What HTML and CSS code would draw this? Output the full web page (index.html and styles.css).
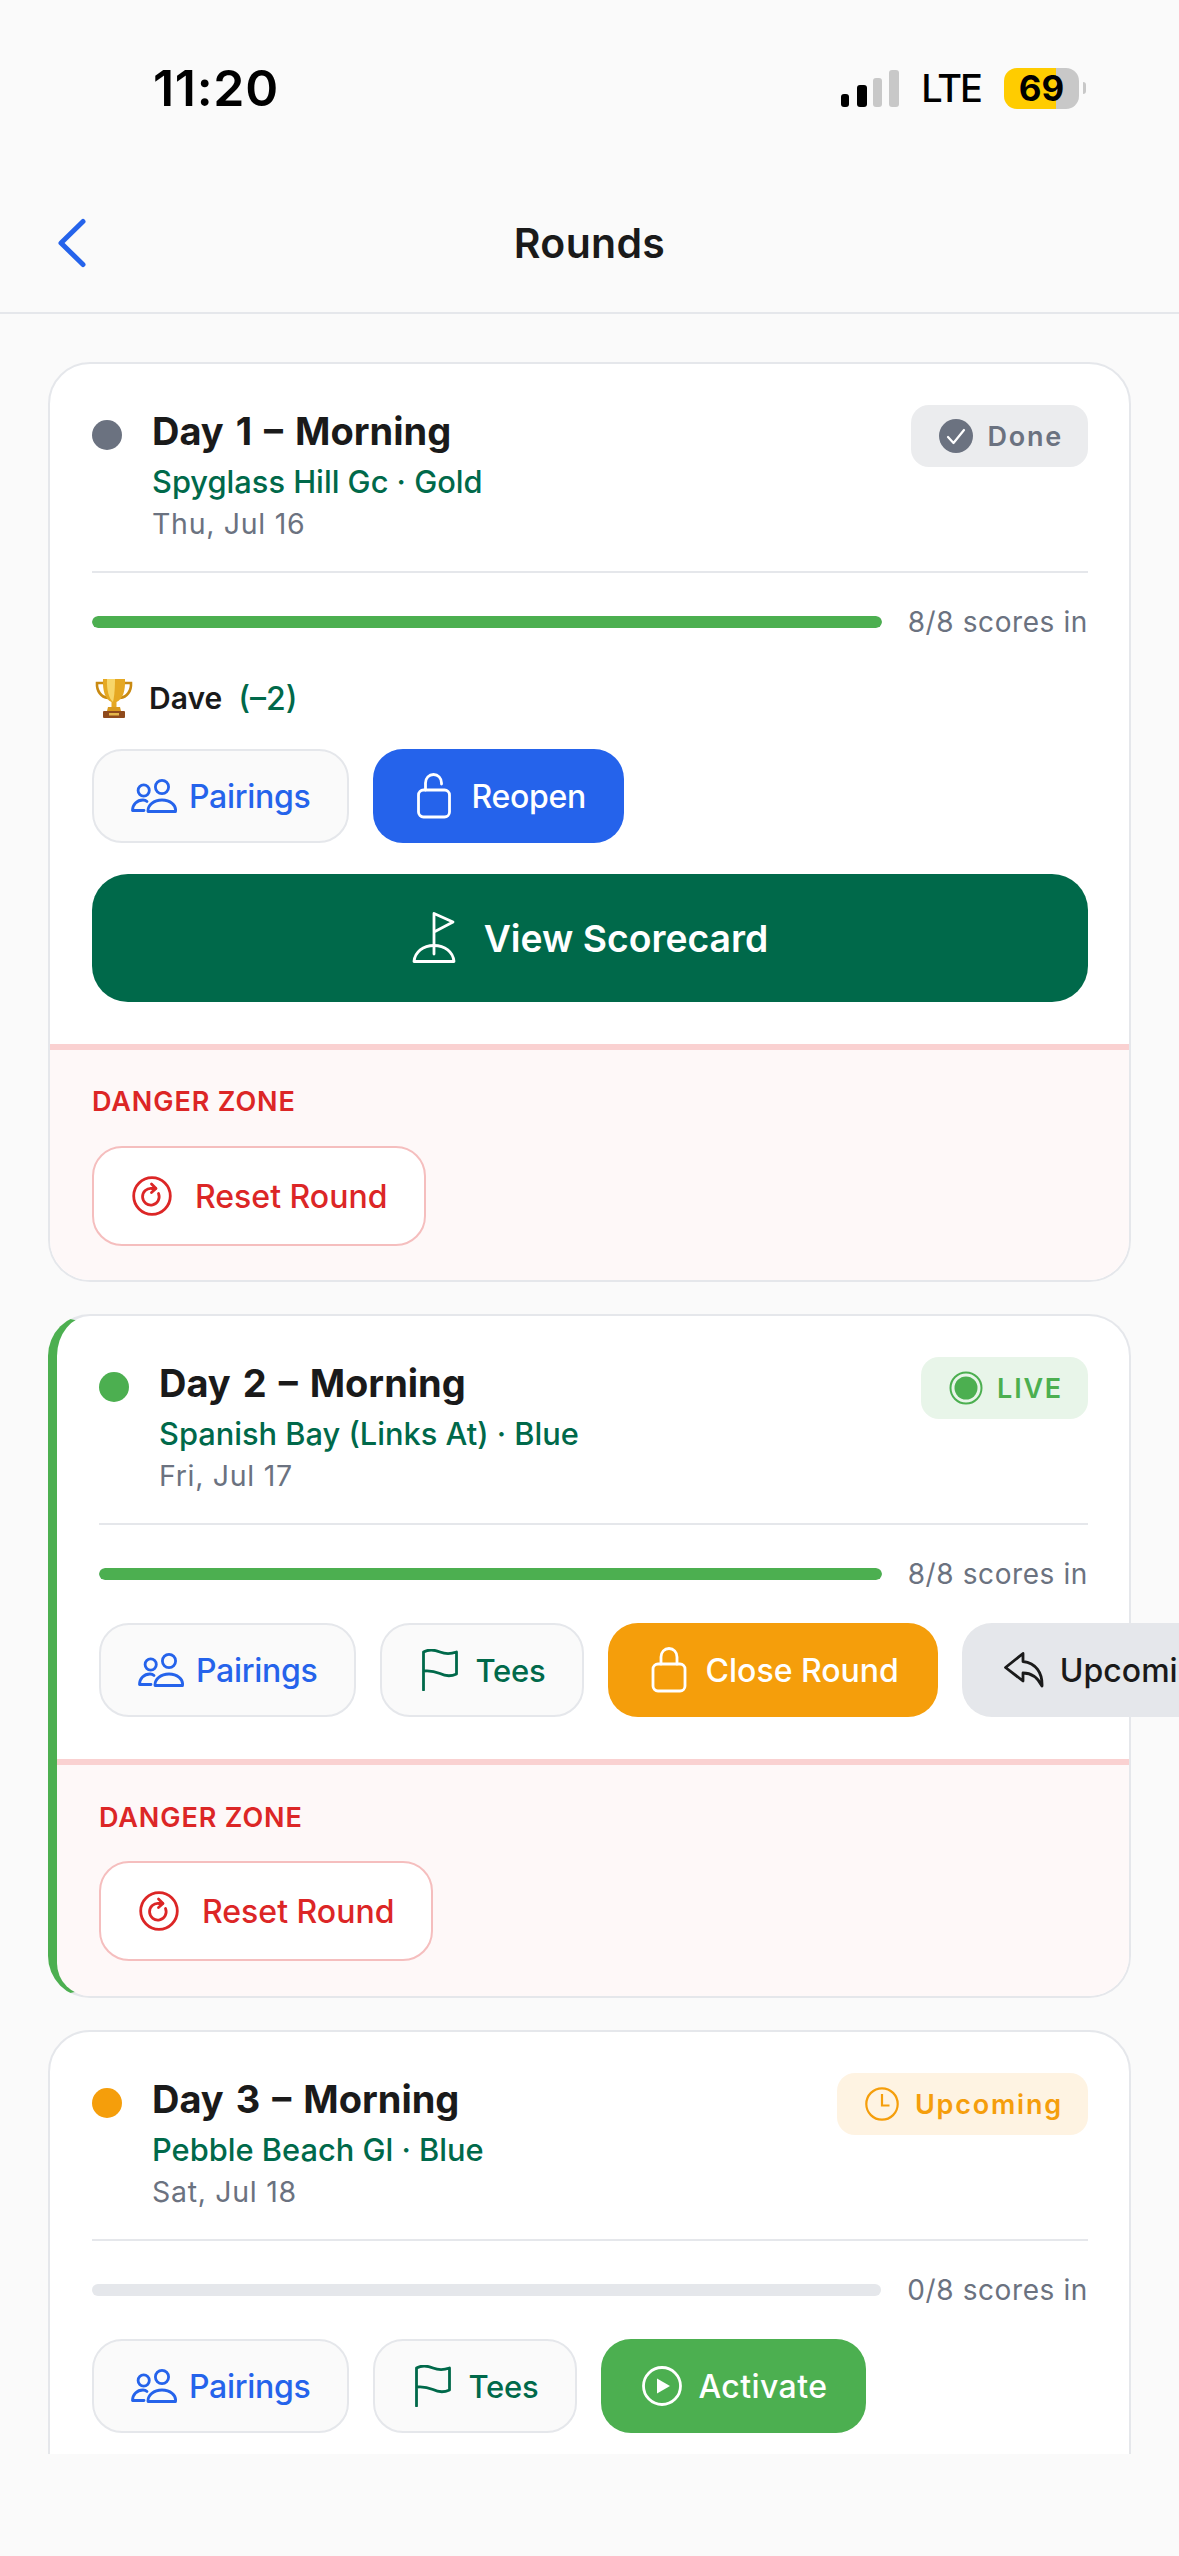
FILE: index.html
```html
<!DOCTYPE html>
<html lang="en">
<head>
<meta charset="utf-8">
<title>Rounds</title>
<link rel="stylesheet" href="styles.css">
</head>
<body>
<svg class="defs" width="0" height="0" aria-hidden="true">
  <defs>
    <symbol id="i-people" viewBox="0 0 46 34"><circle cx="12.700" cy="11.500" r="5.600"/><circle cx="31" cy="8" r="6.600"/><path d="M17 32.500C16.500 26 23 21 31 21C39 21 45.500 26 44.500 32.500Z"/><path d="M16 22.500C15 21.500 13.500 21 12 21C6 21 1.500 25.500 1.500 31.500H13"/></symbol>
    <symbol id="i-flag" viewBox="-3 0 41 42"><path d="M1.500 41V3C6 .5 12 .5 18 3C23 5 29 5 34.500 3V25C29 27.500 23 27 18 24.500C12 22 6 21.500 1.500 22"/></symbol>
    <symbol id="i-reset" viewBox="0 0 40 40"><circle cx="20" cy="20" r="18.300"/><path d="M26.500 17.500A8.300 8.300 0 1 1 20 12.500H23.500"/><path d="M19.500 8L24 12.500L19.500 16.500"/></symbol>
  </defs>
</svg>

<header class="status">
  <span class="time">11:20</span>
  <div class="status-right">
    <svg class="signal" width="58" height="37" viewBox="0 0 58 37"><rect class="on" x="0" y="24" width="8" height="13" rx="3"/><rect class="on" x="16" y="15" width="10" height="22" rx="3"/><rect class="off" x="32" y="8" width="9" height="29" rx="3"/><rect class="off" x="48" y="0" width="10" height="37" rx="3"/></svg>
    <span class="lte">LTE</span>
    <span class="battery">69</span><span class="nub"></span>
  </div>
</header>

<nav class="nav">
  <a class="back" aria-label="Back"><svg width="30" height="50" viewBox="0 0 30 50"><path d="M26 3.500L4 25L26 46.500"/></svg></a>
  <h1 class="title">Rounds</h1>
  <span></span>
</nav>

<main class="list">
  <article class="card">
    <div class="body">
      <div class="head">
        <span class="dot dot-done"></span>
        <div class="info">
          <h2>Day 1 – Morning</h2>
          <p class="course">Spyglass Hill Gc · Gold</p>
          <p class="date">Thu, Jul 16</p>
        </div>
        <span class="badge badge-done">
          <svg class="b-icon" width="34" height="34" viewBox="0 0 34 34"><circle cx="17" cy="17" r="17" fill="#6B7280"/><path d="M9 18L14.500 24L25 11" fill="none" stroke="#fff" stroke-width="2.200" stroke-linecap="round" stroke-linejoin="round"/></svg>
          Done
        </span>
      </div>
      <div class="progress"><div class="bar"><i class="fill"></i></div><span class="count">8/8 scores in</span></div>
      <div class="winner">
        <svg width="38" height="40" viewBox="0 0 38 40"><path d="M8 5H2C1.500 13 6 19 13 20M30 5H36C36.500 13 32 19 25 20" fill="none" stroke="#C98A12" stroke-width="2.600"/><path d="M8 1H30C30.500 13 28 21 21.500 24V29H16.500V24C10 21 7.500 13 8 1Z" fill="#E5A823"/><path d="M12 1H20C20 12 19 20 18 24C14 21 11.500 12 12 1Z" fill="#F7D66A"/><path d="M13 29H25L26 33H12Z" fill="#D99A1E"/><rect x="8" y="33" width="22" height="7" rx="1" fill="#8F4A1C"/><rect x="14" y="35" width="10" height="2.500" fill="#E5B64A"/></svg>
        <span class="w-name">Dave</span><span class="w-score">(–2)</span>
      </div>
      <div class="actions">
        <button class="btn btn-ghost blue"><svg class="ic ic-people"><use href="#i-people"/></svg>Pairings</button>
        <button class="btn btn-blue"><svg class="ic" width="44" height="46" viewBox="0 0 44 46"><rect x="6.500" y="17" width="31" height="27" rx="5"/><path d="M13.500 17V10C13.500 5 17 1.500 21.500 1.500C26 1.500 29.500 5 29.500 10V11"/></svg>Reopen</button>
      </div>
      <button class="btn-full"><svg class="ic" width="44" height="52" viewBox="0 0 44 52"><path d="M22 42V1.500L41 10L22 20"/><path d="M2 49.500C3 40 11 33.500 22 33.500C33 33.500 41 40 42 49.500Z"/></svg>View Scorecard</button>
    </div>
    <section class="danger">
      <h3>DANGER ZONE</h3>
      <button class="btn-reset"><svg class="ic ic-reset"><use href="#i-reset"/></svg>Reset Round</button>
    </section>
  </article>

  <article class="card card-live">
    <div class="body">
      <div class="head">
        <span class="dot dot-live"></span>
        <div class="info">
          <h2>Day 2 – Morning</h2>
          <p class="course">Spanish Bay (Links At) · Blue</p>
          <p class="date">Fri, Jul 17</p>
        </div>
        <span class="badge badge-live">
          <svg class="b-icon" width="34" height="34" viewBox="0 0 34 34"><circle cx="17" cy="17" r="15.500" fill="none" stroke="#4CAF50" stroke-width="2"/><circle cx="17" cy="17" r="11.500" fill="#4CAF50"/></svg>
          LIVE
        </span>
      </div>
      <div class="progress"><div class="bar"><i class="fill"></i></div><span class="count">8/8 scores in</span></div>
      <div class="actions">
        <button class="btn btn-ghost blue"><svg class="ic ic-people"><use href="#i-people"/></svg>Pairings</button>
        <button class="btn btn-ghost green"><svg class="ic ic-flag"><use href="#i-flag"/></svg>Tees</button>
        <button class="btn btn-orange"><svg class="ic" width="44" height="46" viewBox="0 0 44 46"><rect x="6" y="17" width="32" height="27" rx="5"/><path d="M14 17V10C14 5 17.500 1.500 22 1.500C26.500 1.500 30 5 30 10V17"/></svg>Close Round</button>
        <button class="btn btn-gray"><svg class="ic" width="44" height="36" viewBox="-3 0 44 36"><path d="M19 1.500L1.500 15.500L19 29V21C27 21 33 24 38 34C38.500 21 32 11 19 9.500Z"/></svg>Upcoming</button>
      </div>
    </div>
    <section class="danger">
      <h3>DANGER ZONE</h3>
      <button class="btn-reset"><svg class="ic ic-reset"><use href="#i-reset"/></svg>Reset Round</button>
    </section>
  </article>

  <article class="card card-open">
    <div class="body">
      <div class="head">
        <span class="dot dot-up"></span>
        <div class="info">
          <h2>Day 3 – Morning</h2>
          <p class="course">Pebble Beach Gl · Blue</p>
          <p class="date">Sat, Jul 18</p>
        </div>
        <span class="badge badge-up">
          <svg class="b-icon" width="34" height="34" viewBox="0 0 34 34"><circle cx="17" cy="17" r="15.700" fill="none" stroke="#F59E0B" stroke-width="2.200"/><path d="M17 7V18.500H24.500" fill="none" stroke="#F59E0B" stroke-width="2.200"/></svg>
          Upcoming
        </span>
      </div>
      <div class="progress"><div class="bar"></div><span class="count">0/8 scores in</span></div>
      <div class="actions">
        <button class="btn btn-ghost blue"><svg class="ic ic-people"><use href="#i-people"/></svg>Pairings</button>
        <button class="btn btn-ghost green"><svg class="ic ic-flag"><use href="#i-flag"/></svg>Tees</button>
        <button class="btn btn-green"><svg class="ic" width="44" height="40" viewBox="-2 0 44 40"><circle cx="20" cy="20" r="18.500"/><path class="solid" d="M15 12.500L28 20L15 27.500Z"/></svg>Activate</button>
      </div>
    </div>
  </article>
</main>
</body>
</html>
```

FILE: styles.css
```css
* { box-sizing: border-box; }
html, body { margin: 0; padding: 0; }
body {
  width: 1179px;
  height: 2556px;
  overflow: hidden;
  background: #FAFAFA;
  color: #1A1A1A;
  font-family: Inter, "Noto Sans", sans-serif;
}
.defs { display: block; height: 0; }
h1, h2, h3, p { margin: 0; }

/* status bar */
.status {
  height: 176px;
  padding: 0 93px 0 153px;
  display: flex;
  align-items: center;
  justify-content: space-between;
}
.time { font-size: 50px; font-weight: 600; letter-spacing: 0.700px; color: #000; line-height: 1; }
.status-right { display: flex; align-items: center; }
.signal { display: block; margin-right: 22px; }
.signal .on { fill: #000; }
.signal .off { fill: #C8C8C8; }
.lte { font-size: 38px; font-weight: 500; color: #000; line-height: 1; margin-right: 23px; letter-spacing: -2px; }
.battery {
  width: 75px;
  height: 41px;
  border-radius: 13px;
  background: linear-gradient(90deg, #FFCC00 69%, #C8C8C8 69%);
  font-size: 35px;
  font-weight: 700;
  color: #000;
  display: flex;
  align-items: center;
  justify-content: center;
}
.nub { width: 3px; height: 12px; margin-left: 4px; background: #C8C8C8; border-radius: 0 3px 3px 0; }

/* nav */
.nav {
  height: 138px;
  padding-bottom: 2px;
  display: grid;
  grid-template-columns: 1fr auto 1fr;
  align-items: center;
  border-bottom: 2px solid #E5E7EB;
}
.back { display: block; height: 50px; margin-left: 57px; }
.back svg { display: block; fill: none; stroke: #2563EB; stroke-width: 5; stroke-linecap: round; stroke-linejoin: round; }
.title { font-size: 41px; font-weight: 600; letter-spacing: 0.300px; line-height: 1; }

/* list */
.list {
  height: 2140px;
  padding: 48px 48px 0;
  overflow: hidden;
  display: flex;
  flex-direction: column;
  gap: 32px;
}
.card {
  flex-shrink: 0;
  background: #fff;
  border: 2px solid #E5E7EB;
  border-radius: 42px;
}
.card-live { border-left: 9px solid #4CAF50; }
.card-open .body { padding-bottom: 120px; }
.body { padding: 41px 41px 0 42px; }
.head {
  display: flex;
  align-items: flex-start;
  padding-bottom: 28px;
  border-bottom: 2px solid #E5E7EB;
}
.dot { width: 30px; height: 30px; border-radius: 50%; margin: 15px 30px 0 0; flex-shrink: 0; }
.dot-done { background: #6B7280; }
.dot-live { background: #4CAF50; }
.dot-up { background: #F59E0B; }
.info { flex: 1; min-width: 0; }
.info h2 { font-size: 38px; font-weight: 700; line-height: 52px; word-spacing: 3px; }
.course { font-size: 30.800px; font-weight: 500; color: #00694A; line-height: 38px; margin-top: 6px; }
.date { font-size: 28.500px; color: #6B7280; line-height: 38px; margin-top: 4px; letter-spacing: 0.700px; }
.badge {
  height: 62px;
  padding: 0 25px 0 28px;
  border-radius: 18px;
  display: flex;
  align-items: center;
  gap: 14px;
  font-size: 27px;
  font-weight: 600;
  letter-spacing: 1.800px;
}
.b-icon { display: block; flex-shrink: 0; }
.badge-done { background: #EBECEE; color: #6B7280; }
.badge-live { background: #E8F5E9; color: #4CAF50; }
.badge-up { background: #FEF3E2; color: #F59E0B; gap: 16px; }

/* progress */
.progress { display: flex; align-items: center; gap: 26px; height: 36px; margin-top: 31px; }
.bar { flex: 1; height: 12px; border-radius: 6px; background: #E5E7EB; overflow: hidden; }
.fill { display: block; height: 100%; background: #4CAF50; border-radius: 6px; }
.count { font-size: 28px; color: #6B7280; line-height: 36px; letter-spacing: 0.600px; }

/* winner */
.winner { display: flex; align-items: center; height: 40px; margin-top: 38px; padding-left: 3px; }
.winner svg { display: block; margin-right: 16px; }
.w-name { font-size: 30px; font-weight: 600; margin-right: 16px; }
.w-score { font-size: 32px; font-weight: 500; color: #00694A; }

/* buttons */
.actions { display: flex; gap: 24px; margin-top: 31px; }
.btn {
  flex-shrink: 0;
  height: 94px;
  padding: 0 39px;
  border: 0;
  border-radius: 30px;
  display: flex;
  align-items: center;
  gap: 15px;
  font-family: inherit;
  font-size: 32px;
  font-weight: 500;
  white-space: nowrap;
}
.btn-ghost { background: #FAFAFA; border: 2px solid #E5E7EB; padding: 0 37px; }
.blue { color: #2563EB; letter-spacing: -0.300px; gap: 12px; }
.green { color: #00694A; gap: 15px; padding: 0 36px 0 37px; font-size: 31px; letter-spacing: -0.200px; }
.btn-blue { background: #2563EB; color: #fff; letter-spacing: -0.300px; padding: 0 38px 0 39px; }
.btn-orange { background: #F59E0B; color: #fff; }
.btn-gray { background: #E5E7EB; color: #1A1A1A; }
.btn-green { background: #4CAF50; color: #fff; letter-spacing: 0.400px; }
.ic { display: block; flex-shrink: 0; fill: none; stroke: currentColor; stroke-width: 2.800; stroke-linecap: round; stroke-linejoin: round; }
.ic .solid { fill: currentColor; stroke: none; }
.ic-people { width: 46px; height: 34px; }
.ic-flag { width: 41px; height: 42px; }
.ic-reset { width: 40px; height: 40px; }
.btn-full {
  width: 100%;
  height: 128px;
  margin-top: 31px;
  border: 0;
  border-radius: 36px;
  background: #00694A;
  color: #fff;
  display: flex;
  align-items: center;
  justify-content: center;
  gap: 28px;
  font-family: inherit;
  font-size: 37.300px;
  font-weight: 600;
}

/* danger */
.danger {
  margin-top: 42px;
  padding: 35px 42px 34px;
  background: #FEF8F8;
  border-top: 6px solid #FAD1D1;
  border-radius: 0 0 40px 40px;
}
.card-live .danger { border-radius: 0 0 40px 33px; padding: 36px 42px 35px; }
.card-live .btn-reset { margin-top: 26px; }
.danger h3 { font-size: 27px; font-weight: 600; line-height: 34px; letter-spacing: 0.900px; color: #DC2626; }
.btn-reset {
  height: 100px;
  margin-top: 27px;
  padding: 0 37px 0 38px;
  background: #fff;
  border: 2px solid #F5BEBE;
  border-radius: 30px;
  display: flex;
  align-items: center;
  gap: 23px;
  color: #DC2626;
  font-family: inherit;
  font-size: 32px;
  font-weight: 500;
}
```
